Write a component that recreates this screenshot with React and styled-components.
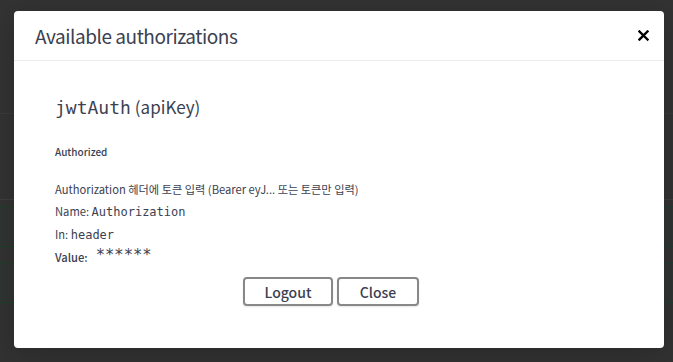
import React from "react"
import styled, { createGlobalStyle } from "styled-components"

const GlobalStyle = createGlobalStyle`
  html, body {
    margin: 0;
    padding: 0;
    background: #333333;
  }
  body {
    font-family: "Noto Sans CJK KR", "Noto Sans", sans-serif;
    color: #3b4151;
  }
`

const rows = [
  { height: 113, border: "#3a3a3a", bg: "#333333" },
  { height: 85, border: "#3e3e3e", bg: "#333333" },
  { height: 6, border: "#1d3f2c", bg: "#333333" },
  { height: 39, border: "#1d3f2c", bg: "#303432" },
  { height: 15, border: "#1d3f2c", bg: "#323332" },
  { height: 39, border: "#1d3f2c", bg: "#303432" },
  { height: 62, border: "transparent", bg: "#313231" },
]

const App = () => {
  return (
    <Page>
      <GlobalStyle />
      <Backdrop>
        {rows.map((row, index) => (
          <BackdropRow key={`row ${index}`} $height={row.height} $border={row.border} $bg={row.bg} />
        ))}
      </Backdrop>

      <Modal>
        <ModalHeader>
          <Title>Available authorizations</Title>
          <CloseBtn aria-label="Close">
            <svg width="11" height="11" viewBox="0 0 11 11">
              <path d="M1.5 1.5 L9.5 9.5 M9.5 1.5 L1.5 9.5" stroke="#000" strokeWidth="2.4" strokeLinecap="square" />
            </svg>
          </CloseBtn>
        </ModalHeader>

        <ModalBody>
          <SchemeTitle>
            <Code>jwtAuth</Code>
            <span>(apiKey)</span>
          </SchemeTitle>
          <Status>Authorized</Status>

          <Rows>
            <Row>Authorization 헤더에 토큰 입력 (Bearer eyJ... 또는 토큰만 입력)</Row>
            <Row>
              Name: <InlineCode>Authorization</InlineCode>
            </Row>
            <Row>
              In: <InlineCode>header</InlineCode>
            </Row>
            <Row>
              <Label>Value:</Label>
              <Masked>******</Masked>
            </Row>
          </Rows>

          <BtnGroup>
            <Btn $width={90}>Logout</Btn>
            <Btn $width={82}>Close</Btn>
          </BtnGroup>
        </ModalBody>
      </Modal>
    </Page>
  )
}

export default App

const Page = styled.div`
  position: relative;
  width: 673px;
  height: 362px;
  overflow: hidden;
`
const Backdrop = styled.div`
  display: flex;
  flex-direction: column;
  width: 100%;
  height: 100%;
`
const BackdropRow = styled.div`
  flex: none;
  height: ${props => props.$height}px;
  background: ${props => props.$bg};
  border-bottom: 1px solid ${props => props.$border};
`
const Modal = styled.div`
  position: absolute;
  top: 11px;
  left: 14px;
  width: 650px;
  height: 337px;
  background: #fff;
  border-radius: 4px;
  box-shadow: 0 4px 30px rgba(0, 0, 0, 0.2);
  display: flex;
  flex-direction: column;
`
const ModalHeader = styled.div`
  display: flex;
  align-items: center;
  justify-content: space-between;
  height: 49px;
  padding: 0 13px 0 21px;
  border-bottom: 1px solid #ebebeb;
`
const Title = styled.h3`
  margin: 0;
  font-size: 19px;
  font-weight: 400;
  letter-spacing: -0.45px;
  color: #3b4151;
  line-height: 1;
`
const CloseBtn = styled.button`
  display: flex;
  align-items: center;
  justify-content: center;
  width: 16px;
  height: 16px;
  padding: 0;
  border: none;
  background: none;
  cursor: pointer;
`
const ModalBody = styled.div`
  display: flex;
  flex-direction: column;
  padding: 34px 41px 0;
`
const SchemeTitle = styled.h4`
  display: flex;
  align-items: baseline;
  gap: 4px;
  margin: 0;
  height: 24px;
  line-height: 24px;
  font-size: 17px;
  font-weight: 400;
  color: #3b4151;
`
const Code = styled.code`
  font-family: "DejaVu Sans Mono", monospace;
  font-size: 18px;
`
const Status = styled.h6`
  margin: 26px 0 0;
  font-size: 10px;
  line-height: 14px;
  font-weight: 500;
  color: #3b4151;
`
const Rows = styled.div`
  display: flex;
  flex-direction: column;
  margin-top: 19px;
`
const Row = styled.div`
  font-size: 11.2px;
  line-height: 22px;
  color: #3b4151;
  white-space: pre;
`
const InlineCode = styled.code`
  font-family: "DejaVu Sans Mono", monospace;
  font-size: 12px;
`
const Label = styled.span`
  font-weight: 500;
`
const Masked = styled.code`
  margin-left: 8px;
  font-family: "DejaVu Sans Mono", monospace;
  font-size: 15.5px;
  position: relative;
  top: -2px;
`
const BtnGroup = styled.div`
  display: flex;
  justify-content: center;
  gap: 4px;
  margin-top: 9px;
  padding-right: 16px;
`
const Btn = styled.button`
  width: ${props => props.$width}px;
  height: 29px;
  padding: 0;
  border: 2px solid #888;
  border-radius: 4px;
  background: #fff;
  box-shadow: 0 1px 2px rgba(0, 0, 0, 0.1);
  font-family: "Noto Sans CJK KR", "Noto Sans", sans-serif;
  font-size: 14px;
  font-weight: 500;
  color: #3b4151;
  cursor: pointer;
`
